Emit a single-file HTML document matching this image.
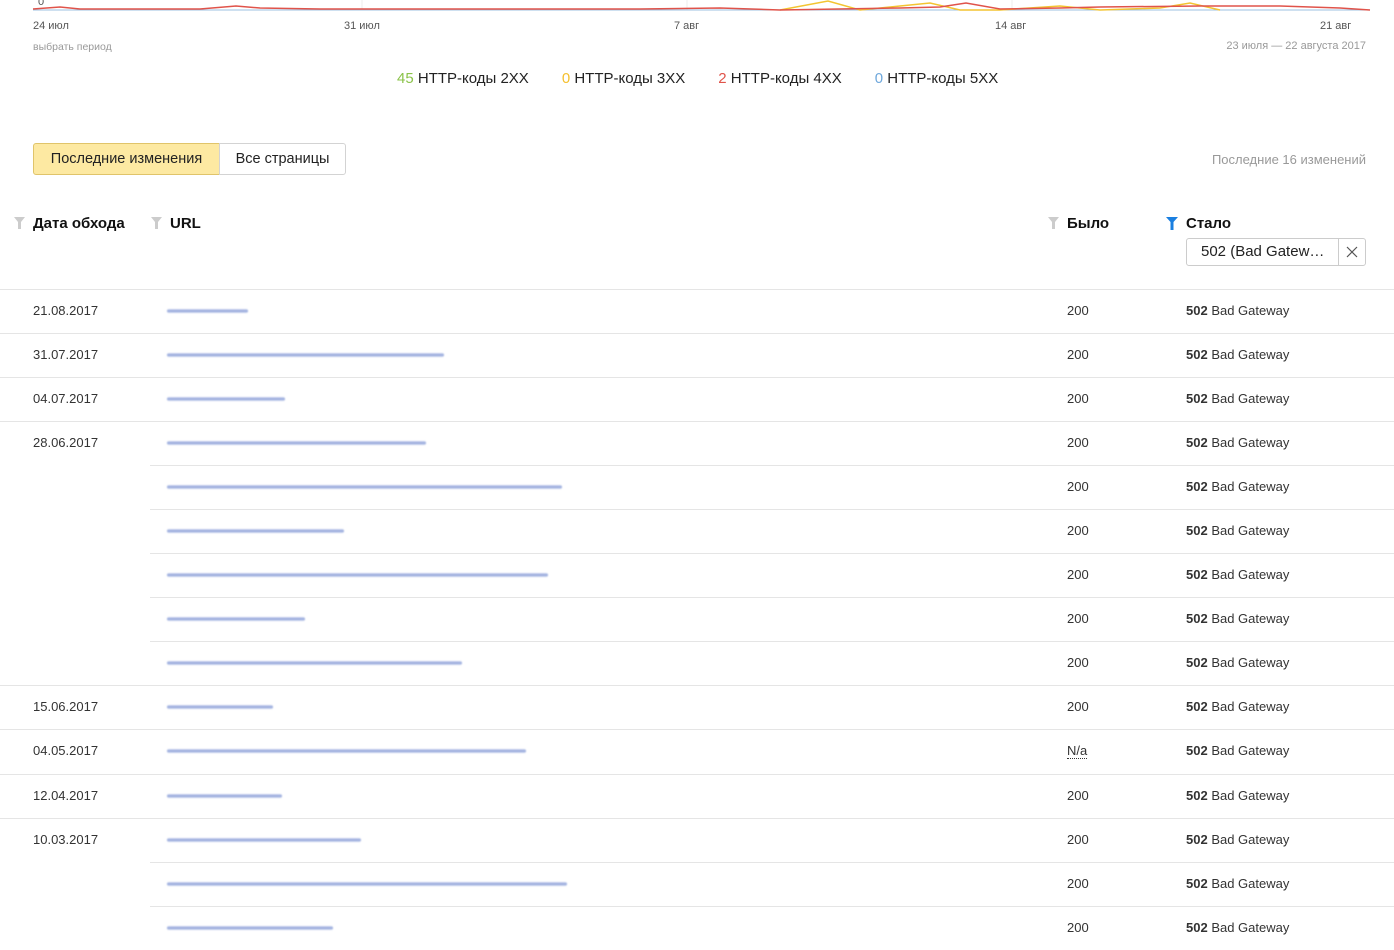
<!DOCTYPE html>
<html><head><meta charset="utf-8"><style>
*{margin:0;padding:0;box-sizing:border-box}
body{width:1394px;height:943px;background:#fff;font-family:"Liberation Sans",Arial,sans-serif;color:#222;position:relative;overflow:hidden}
.a{position:absolute;white-space:nowrap}
.s{font-size:11px;color:#999}
.ax{font-size:11px;color:#555}
.hl{position:absolute;height:1px;background:#e5e5e5;right:0}
.d{font-size:13px;color:#333}
.u{position:absolute;height:4px;border-radius:2px;background:linear-gradient(#c9d3ef,#7f95d3 50%,#c9d3ef);filter:blur(0.8px);opacity:.85}
.hd{font-size:15px;font-weight:bold;color:#111}
.r{position:absolute;left:0;right:0;height:44px}
.r .c1{position:absolute;left:33px;top:14px}
.r .c3{position:absolute;left:1067px;top:14px}
.r .c4{position:absolute;left:1186px;top:14px}
.r .u{left:167px;top:20px}
.r .l{position:absolute;top:0;right:0;height:1px;background:#e5e5e5}
</style></head><body>
<svg class="a" style="left:0;top:0" width="1394" height="20">
<line x1="362" y1="0" x2="362" y2="10" stroke="#eee"/>
<line x1="687" y1="0" x2="687" y2="10" stroke="#eee"/>
<line x1="1012" y1="0" x2="1012" y2="10" stroke="#eee"/>
<line x1="33" y1="10" x2="1370" y2="10" stroke="#9ec0e0"/>
<polyline fill="none" stroke="#f3c431" stroke-width="1.5" points="780,10 828,1 860,10 900,6 930,3 960,10 1000,10 1060,6 1100,10 1160,8 1190,3 1220,10"/>
<polyline fill="none" stroke="#e0534a" stroke-width="1.5" points="33,9 60,7 80,9 200,9 236,6 260,8 320,9 500,9 640,9 720,8 780,10 900,8 940,7 966,3 1000,9 1060,8 1100,7 1200,6 1280,6 1340,8 1370,10"/>
<text x="38" y="5" font-size="11" fill="#555" font-family="Liberation Sans">0</text>
</svg>
<div class="a ax" style="left:33px;top:20px">24 июл</div>
<div class="a ax" style="left:344px;top:20px">31 июл</div>
<div class="a ax" style="left:674px;top:20px">7 авг</div>
<div class="a ax" style="left:995px;top:20px">14 авг</div>
<div class="a ax" style="left:1320px;top:20px">21 авг</div>
<div class="a s" style="left:33px;top:41px;font-size:10.5px">выбрать период</div>
<div class="a s" style="right:28px;top:40px">23 июля — 22 августа 2017</div>
<div class="a" style="left:397px;top:70px;font-size:15px;color:#222">
<span style="color:#8bc34a">45</span> HTTP-коды 2XX<span style="display:inline-block;width:33px"></span><span style="color:#f5c02e">0</span> HTTP-коды 3XX<span style="display:inline-block;width:33px"></span><span style="color:#e0534a">2</span> HTTP-коды 4XX<span style="display:inline-block;width:33px"></span><span style="color:#6fa8dc">0</span> HTTP-коды 5XX</div>
<div class="a" style="left:33px;top:143px;width:187px;height:32px;background:#fde9a2;border:1px solid #e0c46a;border-radius:3px 0 0 3px;font-size:14.5px;line-height:30px;text-align:center">Последние изменения</div>
<div class="a" style="left:219px;top:143px;width:127px;height:32px;background:#fff;border:1px solid #d3d3d3;border-radius:0 3px 3px 0;font-size:14.5px;line-height:30px;text-align:center">Все страницы</div>
<div class="a" style="right:28px;top:152px;font-size:13px;color:#999">Последние 16 изменений</div>
<svg class="a" style="left:14px;top:217px" width="11" height="12"><path d="M0 0H11L7 5V12H4V5Z" fill="#ccc"/></svg>
<div class="a hd" style="left:33px;top:215px">Дата обхода</div>
<svg class="a" style="left:151px;top:217px" width="11" height="12"><path d="M0 0H11L7 5V12H4V5Z" fill="#ccc"/></svg>
<div class="a hd" style="left:170px;top:215px">URL</div>
<svg class="a" style="left:1048px;top:217px" width="11" height="12"><path d="M0 0H11L7 5V12H4V5Z" fill="#ccc"/></svg>
<div class="a hd" style="left:1067px;top:215px">Было</div>
<svg class="a" style="left:1166px;top:217px" width="12" height="13"><path d="M0 0H12L7.5 5V13H4.5V5Z" fill="#1a7fe0"/></svg>
<div class="a hd" style="left:1186px;top:215px">Стало</div>
<div class="a" style="left:1186px;top:238px;width:180px;height:28px;border:1px solid #ccc;border-radius:3px;font-size:15px;line-height:26px;padding-left:14px">502 (Bad Gatew…</div>
<div class="a" style="left:1338px;top:238px;width:1px;height:28px;background:#ccc"></div>
<svg class="a" style="left:1346px;top:246px" width="12" height="12"><path d="M1 1L11 11M11 1L1 11" stroke="#555" stroke-width="1.2"/></svg>

<div class="r" style="top:289px"><div class="l" style="left:0"></div><div class="c1 d">21.08.2017</div><div class="u" style="width:81px"></div><div class="c3 d">200</div><div class="c4 d"><b>502</b> Bad Gateway</div></div>
<div class="r" style="top:333px"><div class="l" style="left:0"></div><div class="c1 d">31.07.2017</div><div class="u" style="width:277px"></div><div class="c3 d">200</div><div class="c4 d"><b>502</b> Bad Gateway</div></div>
<div class="r" style="top:377px"><div class="l" style="left:0"></div><div class="c1 d">04.07.2017</div><div class="u" style="width:118px"></div><div class="c3 d">200</div><div class="c4 d"><b>502</b> Bad Gateway</div></div>
<div class="r" style="top:421px"><div class="l" style="left:0"></div><div class="c1 d">28.06.2017</div><div class="u" style="width:259px"></div><div class="c3 d">200</div><div class="c4 d"><b>502</b> Bad Gateway</div></div>
<div class="r" style="top:465px"><div class="l" style="left:150px"></div><div class="u" style="width:395px"></div><div class="c3 d">200</div><div class="c4 d"><b>502</b> Bad Gateway</div></div>
<div class="r" style="top:509px"><div class="l" style="left:150px"></div><div class="u" style="width:177px"></div><div class="c3 d">200</div><div class="c4 d"><b>502</b> Bad Gateway</div></div>
<div class="r" style="top:553px"><div class="l" style="left:150px"></div><div class="u" style="width:381px"></div><div class="c3 d">200</div><div class="c4 d"><b>502</b> Bad Gateway</div></div>
<div class="r" style="top:597px"><div class="l" style="left:150px"></div><div class="u" style="width:138px"></div><div class="c3 d">200</div><div class="c4 d"><b>502</b> Bad Gateway</div></div>
<div class="r" style="top:641px"><div class="l" style="left:150px"></div><div class="u" style="width:295px"></div><div class="c3 d">200</div><div class="c4 d"><b>502</b> Bad Gateway</div></div>
<div class="r" style="top:685px"><div class="l" style="left:0"></div><div class="c1 d">15.06.2017</div><div class="u" style="width:106px"></div><div class="c3 d">200</div><div class="c4 d"><b>502</b> Bad Gateway</div></div>
<div class="r" style="top:729px;height:45px"><div class="l" style="left:0"></div><div class="c1 d">04.05.2017</div><div class="u" style="width:359px"></div><div class="c3 d"><span style="border-bottom:1px dotted #333">N/a</span></div><div class="c4 d"><b>502</b> Bad Gateway</div></div>
<div class="r" style="top:774px"><div class="l" style="left:0"></div><div class="c1 d">12.04.2017</div><div class="u" style="width:115px"></div><div class="c3 d">200</div><div class="c4 d"><b>502</b> Bad Gateway</div></div>
<div class="r" style="top:818px"><div class="l" style="left:0"></div><div class="c1 d">10.03.2017</div><div class="u" style="width:194px"></div><div class="c3 d">200</div><div class="c4 d"><b>502</b> Bad Gateway</div></div>
<div class="r" style="top:862px"><div class="l" style="left:150px"></div><div class="u" style="width:400px"></div><div class="c3 d">200</div><div class="c4 d"><b>502</b> Bad Gateway</div></div>
<div class="r" style="top:906px"><div class="l" style="left:150px"></div><div class="u" style="width:166px"></div><div class="c3 d">200</div><div class="c4 d"><b>502</b> Bad Gateway</div></div>
</body></html>
